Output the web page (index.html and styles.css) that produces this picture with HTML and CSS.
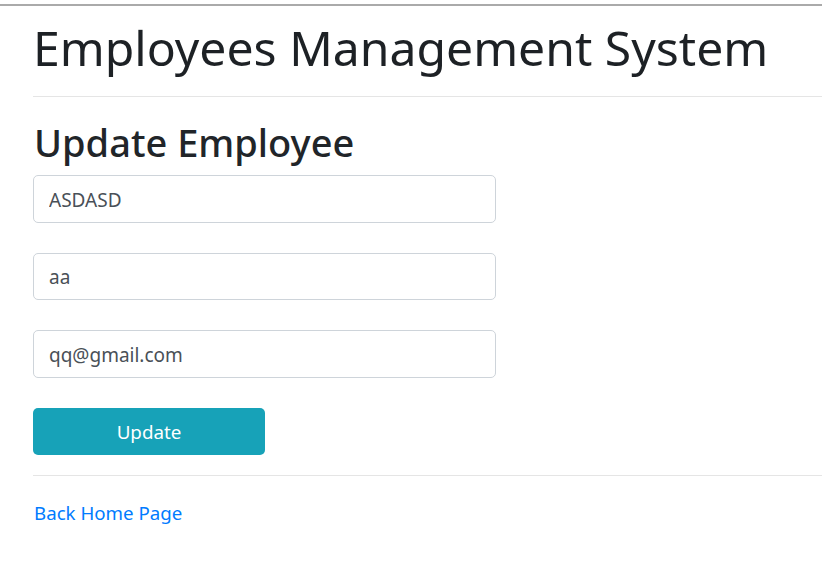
FILE: index.html
```html
<!DOCTYPE html>
<html>
<head>
<meta charset="utf-8">
<title>Employees Management System</title>
<link rel="stylesheet" href="styles.css">
</head>
<body>
<div class="topline"></div>
<div class="container">
  <h1 class="title">Employees Management System</h1>
  <hr class="rule">
  <h2 class="subtitle">Update Employee</h2>
  <form class="form">
    <input class="field" type="text" value="ASDASD">
    <input class="field" type="text" value="aa">
    <input class="field" type="text" value="qq@gmail.com">
    <button class="btn" type="button">Update</button>
  </form>
  <hr class="rule rule-bottom">
  <a class="link" href="#">Back Home Page</a>
</div>
</body>
</html>
```

FILE: styles.css
```css
html, body {
  margin: 0;
  padding: 0;
  background: #fff;
}
body {
  padding-top: 4px;
  font-family: "Noto Sans", "Open Sans", sans-serif;
  color: #212529;
  font-size: 19px;
}
.topline {
  height: 0;
  border-top: 2px solid #aaaaaa;
}
.container {
  padding-left: 33px;
}
.title {
  margin: 12px 0 0 0;
  font-size: 48.1px;
  font-weight: 400;
  line-height: 60px;
  color: #1d2125;
}
.rule {
  margin: 18px 0 0 0;
  border: 0;
  border-top: 1px solid #e5e5e5;
  height: 0;
}
.subtitle {
  margin: 21px 0 0 1px;
  font-size: 38px;
  font-weight: 500;
  line-height: 48px;
  color: #212529;
}
.form {
  margin-top: 9px;
  display: flex;
  flex-direction: column;
  align-items: flex-start;
  gap: 30px;
}
.field {
  box-sizing: border-box;
  width: 463px;
  height: 47.5px;
  margin: 0;
  padding: 2px 15px 0;
  border: 1px solid #ced4da;
  border-radius: 5px;
  font-family: inherit;
  font-size: 19px;
  color: #495057;
  background: #fff;
  outline: none;
}
.btn {
  box-sizing: border-box;
  width: 232px;
  height: 47px;
  margin-top: 0.5px;
  padding-top: 2px;
  border: 0;
  border-radius: 5px;
  background: #17a2b8;
  color: #fff;
  font-family: inherit;
  font-size: 18.8px;
}
.rule-bottom {
  margin-top: 20px;
}
.link {
  display: inline-block;
  margin-top: 22px;
  margin-left: 1px;
  line-height: 30px;
  color: #007bff;
  text-decoration: none;
  font-size: 18.7px;
}
```
